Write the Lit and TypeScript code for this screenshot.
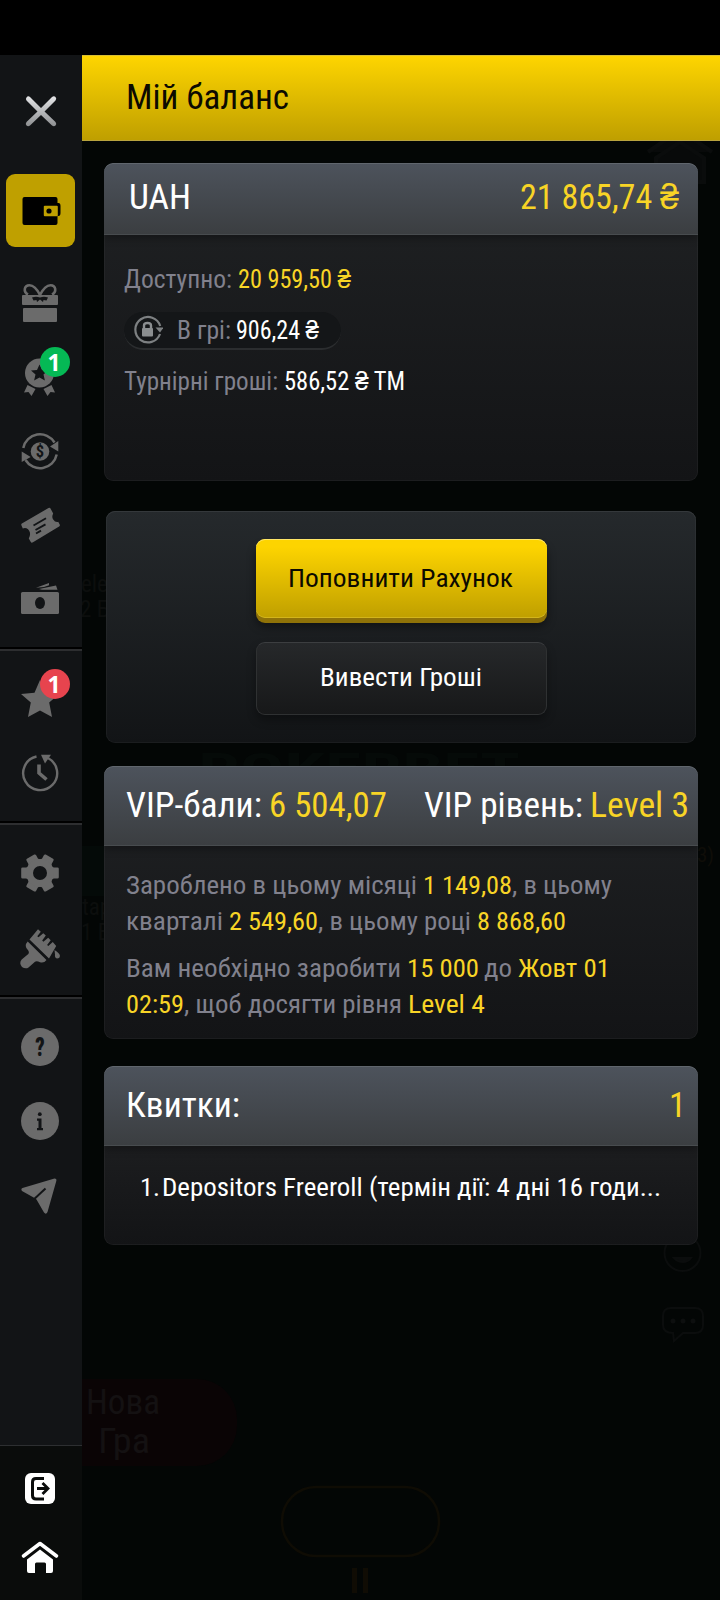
import { LitElement, html, svg, css } from "lit";
import { customElement, property } from "lit/decorators.js";

/* A single run of text, set to an exact advance width. */
@customElement("text-run")
class TextRun extends LitElement {
  @property() text = "";
  @property({ type: Number }) width = 100;
  @property({ type: Number }) size = 26;

  static styles = css`
    :host { display: block; flex: none; }
    svg { display: block; overflow: visible; fill: currentColor; }
  `;

  render() {
    const base = Math.floor(this.size);
    return html`<svg width=${this.width} height=${Math.round(base * 1.4)}>
      <text x="0" y=${base} font-size=${this.size}
        font-family="'Roboto Condensed', Roboto, sans-serif" font-stretch="75%"
        textLength=${this.width} lengthAdjust="spacingAndGlyphs">${this.text}</text>
    </svg>`;
  }
}

type Run = [text: string, width: number, tone: string, gap?: number];
const line = (size: number, runs: Run[], cls = "") => html`
  <div class="line ${cls}">
    ${runs.map(([t, w, tone, gap = 0]) => html`
      <text-run class=${tone} .text=${t} .width=${w} .size=${size} style="margin-left:${gap}px"></text-run>`)}
  </div>`;

const icons: Record<string, unknown> = {
  wallet: svg`<path d="M4 6h31q2 0 2 2v4h1q2 0 2 3v7q0 3-2 3h-1v7q0 2-2 2H4q-2 0-2-2V8q0-2 2-2z" fill="#000" transform="translate(-.5 0)"/>
    <rect x="22.800" y="14.800" width="14" height="10.400" rx="1" fill="#bfa000"/><circle cx="28" cy="20" r="2.600" fill="#000"/>`,
  gift: svg`<path d="M20 12C16 4 13 2.200 9.500 2.200C4 2.200 3 9 8 11.500M20 12C24 4 27 2.200 30.500 2.200C36 2.200 37 9 32 11.500" fill="none" stroke="#6b6b6b" stroke-width="2.600"/>
    <rect x="2" y="12" width="36" height="10" rx="1"/><rect x="3" y="25" width="34" height="14" rx="1"/>
    <path d="M12 14.500q4-1.500 8 0 4-1.500 8 0l-1.500 3-3-.5-.5 2-3-2.500-3 2.500-.5-2-3 .5z" fill="#121416"/>`,
  medal: svg`<circle cx="19.500" cy="16" r="14.500"/>
    <path d="M19.500 7.500l2.500 5.500 6 .6-4.500 4 1.400 6-5.400-3.100-5.400 3.100 1.400-6-4.500-4 6-.6z" fill="#121416"/>
    <path d="M7.500 28l8 4-4 7-3-4-4.500 .5zM31.500 28l-8 4 4 7 3-4 4.500 .5z"/>`,
  swap: svg`<g fill="none" stroke="#6b6b6b" stroke-width="2.500"><path d="M3.300 17A17 17 0 0 1 34.500 11.500"/><path d="M36.700 23.500A17 17 0 0 1 5.500 29"/></g>
    <path d="M38.300 10v10.500L30 15.500zM1.700 31V20.500l9 5.500z"/><circle cx="20" cy="20.500" r="9.300"/>
    <text x="20" y="26.300" text-anchor="middle" font-family="Roboto, sans-serif" font-weight="700" font-size="16.500" fill="#121416">$</text>`,
  ticket: svg`<path d="M1.500 20.500q-.8-1.500 .8-2.300L28.500 3q1.500-.8 2 .5l2.700 5q-2.500 5 1.800 8 2 .8 3.200 .2l1.500 2.700q.6 1.300-.6 2L13 37.300q-1.500 1-2.200-.2l-2-3.500q3.400-7-2.300-10.300-2-.5-3.700 .2z"/>
    <path d="M13.500 20.500l12.500-7.200M15.500 25l10-5.700M16 28.500l5-2.800" stroke="#121416" stroke-width="1.900" fill="none"/>`,
  cash: svg`<rect x="1" y="13" width="38" height="22" rx="1.500"/><ellipse cx="20" cy="24" rx="5" ry="6" fill="#121416"/>
    <path d="M16 8.800l13-4.800v2.300l-5 1.700zM19 10L36 6.500l1.500 4.200H22z"/>`,
  star: svg`<path d="M20 1l5.500 12.700 13.500 1.300-9.800 8.500 2.800 14.500-12-6.500L8 38l2.800-14.500L1 15l13.500-1.300z"/>`,
  clock: svg`<path d="M16.500 3.500A17 17 0 1 0 28 5" fill="none" stroke="#6b6b6b" stroke-width="2.400"/>
    <path d="M21 1.800h10L25 10.500z"/><path d="M19 11.500v8.500l7.500 6.500" fill="none" stroke="#6b6b6b" stroke-width="3.600"/>`,
  gear: svg`${[0, 60, 120, 180, 240, 300].map((a) => svg`<path d="M30 13.200l4 1.300h3.500q1.300 0 1.300 1.300v8.400q0 1.300-1.300 1.300H34l-4 1.300z" transform="rotate(${a} 20 20)"/>`)}
    <circle cx="20" cy="20" r="10.500" fill="none" stroke="#6b6b6b" stroke-width="7"/>`,
  brush: svg`<path d="M9.500 12.500L18 2.300l2.800 2.400-3.500 4.500 1.200 1.100 4.800-4 2.500 2.300-3.600 5 1.200 1.100 4.800-4 2.500 2.500-3.600 4.800 1.200 1.100 4.500-4 3.400 4L29 31.500z"/>
    <path d="M7.700 14.500L26.500 33q-2.500 3.500-6.500 2.300-3.500-1.800-5.300-.3L8.500 40.500q-3 2-6.500-.6-3.300-3.700-.3-7.300L8.300 27q1.500-2-.8-4.500-3.500-4 .2-8z"/><path d="M8.600 13.500L27.700 32.300" stroke="#121416" stroke-width="1.500"/>
    <path d="M34.500 23q5 3 5.400 5.500 .2 3-2.900 3-2.500-.5-2-4z"/>`,
  help: svg`<circle cx="20" cy="20" r="19"/><text x="20" y="28.700" text-anchor="middle" font-family="Roboto Condensed, Roboto" font-stretch="75%" font-weight="900" font-size="25" textLength="9.500" lengthAdjust="spacingAndGlyphs" fill="#121416">?</text>`,
  info: svg`<circle cx="20" cy="20" r="19"/><circle cx="19.800" cy="13.200" r="1.900" fill="#121416"/><path d="M17 17.500h4.500v9.500h1.500v2.300h-6V27h1.500v-7.200H17z" fill="#121416"/>`,
  send: svg`<path d="M2.500 13L34.500 3.500q2.500 0 1.800 2.500L27.500 37q-1.500 3-3.500 .5L16.500 24.500 14.500 23 2 16q-1.500-2 .5-3z"/><path d="M14.500 23.700L25.500 13.500" stroke="#121416" stroke-width="2"/>`,
  close: svg`<defs><linearGradient id="x" x1="0" y1="0" x2="0" y2="1"><stop offset="0" stop-color="#e4e5e7"/><stop offset="1" stop-color="#8d8f91"/></linearGradient></defs>
    <path fill="url(#x)" d="M6.500 6.500q1.500-2 3.500-.5L21 17 32 6q2-1.500 3.500 0 1.500 1.500 0 3.500L24.500 20.500 35.500 31q1.500 2 0 3.500-1.500 1.300-3.500 0L21 24 10 34.500q-2 1.300-3.500 0-1.500-1.500 0-3.500L17.500 20.500 6.500 9.500q-1.200-1.500 0-3z"/>`,
  exit: svg`<rect x="5" y="4" width="30" height="31" rx="6" fill="#fff"/><path d="M24 9.500H16q-3.500 0-3.500 3.500v13.500q0 3.500 3.500 3.500h8" fill="none" stroke="#0a0c0b" stroke-width="3"/>
    <path d="M17 19.500h10M22.500 14l5.500 5.500-5.500 5.500" fill="none" stroke="#0a0c0b" stroke-width="2.800"/>`,
  home: svg`<path d="M3.500 18L20 5.500 36.500 18" fill="none" stroke="#fff" stroke-width="3.600" stroke-linecap="round" stroke-linejoin="round"/>
    <path d="M20 11.500L33 21.500V33q0 2-2 2h-5v-9q0-1.500-1.500-1.500h-8Q15 24.500 15 26v9H9q-2 0-2-2V21.500z" fill="#fff"/>`,
};
const icon = (name: string) => html`<svg class="icon" viewBox="0 0 40 40">${icons[name]}</svg>`;
const item = (name: string, badge = "") => html`
  <div class="item"><div class="glyph">${icon(name)}${badge ? html`<span class="badge ${badge}">1</span>` : ""}</div></div>`;

@customElement("app-root")
class AppRoot extends LitElement {
  static styles = css`
    :host {
      display: block; position: relative; width: 720px; height: 1600px; overflow: hidden;
      background: #030605; font-family: "Roboto Condensed", Roboto, sans-serif; font-stretch: 75%;
    }
    .status { height: 55px; background: #000; }
    .app { display: flex; height: 1545px; position: relative; }
    .rail {
      width: 82px; box-sizing: border-box; padding-right: 2px; background: #121416; flex: none;
      display: flex; flex-direction: column; fill: #6b6b6b;
    }
    .icon { width: 40px; height: 40px; display: block; flex: none; overflow: visible; }
    .close { height: 112px; margin-bottom: 7px; display: flex; align-items: center; justify-content: center; }
    .active {
      height: 73px; width: 69px; margin: 0 0 19px 6px; border-radius: 9px; background: #bfa000;
      display: flex; align-items: center; justify-content: center;
    }
    .group { padding: 11px 0 13px; margin-right: -2px; border-bottom: 2px solid #2d2e30; box-shadow: inset 0 -2px #000; }
    .group.first { padding-top: 0; }
    .group.last { border: 0; box-shadow: none; }
    .item { height: 74px; width: 80px; display: flex; align-items: center; justify-content: center; }
    .glyph { position: relative; }
    .badge {
      position: absolute; left: 20px; top: -10px; width: 30px; height: 30px; border-radius: 50%;
      font: 700 23px/30px "Open Sans", "Noto Sans", sans-serif; color: #fff; text-align: center; text-indent: -2px;
    }
    .green { background: #05b955; }
    .red { background: #e7444e; }
    .foot {
      margin: auto -2px 0 0; height: 155px; border-top: 1px solid #2d2f31; background: #0a0c0b;
      display: flex; flex-direction: column; align-items: center; padding: 23px 2px 0 0; box-sizing: border-box; gap: 29px;
    }
    .panel { flex: 1; min-width: 0; }
    .title {
      height: 86px; box-sizing: border-box; padding: 18px 0 0 44px; color: #0c0a00;
      background: linear-gradient(#fed500, #bf9f00); border-top: 1px solid #d8be32; border-bottom: 1px solid #b8a33e;
    }
    .stack { padding: 22px 22px 0; display: flex; flex-direction: column; }
    .line { display: flex; }
    .card {
      border-radius: 9px; overflow: hidden; box-sizing: border-box; position: relative;
      background: linear-gradient(#202224, #131416); box-shadow: inset 0 0 0 1px #ffffff0a;
    }
    .head {
      box-sizing: border-box; background: linear-gradient(#4d535c, #3b3e41); border-bottom: 1px solid #484c4f;
      box-shadow: inset 0 1px #60666d, 0 3px 9px #0005; display: flex; justify-content: space-between; border-radius: 9px 9px 0 0;
    }
    .white { color: #fff; }
    .gold { color: #f8d426; }
    .grey { color: #81818d; }
    .black { color: #0c0a00; }
    .balance { height: 318px; }
    .balance .head { height: 72px; padding: 11px 19px 0 25px; }
    .balance .body { padding: 28px 20px 0; display: flex; flex-direction: column; align-items: flex-start; }
    .pill {
      display: flex; align-items: center; width: 217px; height: 38px; box-sizing: border-box; margin: 14px 0 15px; border-radius: 19px;
      background: #141618; border-bottom: 2px solid #2b2d2f; padding-left: 9px;
    }
    .lock { width: 30px; height: 30px; margin-right: 14px; }
    .pill .line { padding-top: 3px; }
    .actions {
      margin: 30px 2px 0; height: 232px; padding-top: 28px; background: linear-gradient(#25292c, #121416);
      display: flex; flex-direction: column; align-items: center; box-shadow: inset 0 1px #34383b, inset 0 0 0 1px #ffffff0a;
    }
    .btn { width: 291px; box-sizing: border-box; border-radius: 9px; display: flex; justify-content: center; flex: none; padding-right: 1px; }
    .deposit {
      height: 79px; padding-top: 22px; background: linear-gradient(#fdd400 10%, #bf9f00); margin-bottom: 24px;
      box-shadow: 0 5px #8f7208, inset 0 1px #ffe668, inset 0 -1px #d2b41c, 0 8px 10px #0007;
    }
    .withdraw {
      height: 73px; padding-top: 17px; background: linear-gradient(#26282a, #171819);
      border: 1px solid #2f3132; border-top-color: #3c3e40; box-shadow: 0 5px 10px #0005;
    }
    .vip { margin-top: 23px; height: 273px; }
    .vip .head, .tickets .head { height: 80px; padding: 16px 9px 0 22px; }
    .vip .body { padding: 22px 22px 0; }
    .second { margin-bottom: 11px; }
    .tickets { margin-top: 27px; height: 179px; background: linear-gradient(#1c1d1f 45%, #131416); }
    .tickets .head { padding-right: 12px; }
    .tickets .body { padding: 24px 36px 0; }
    .ghost { position: absolute; inset: 0; width: 720px; height: 1600px; }
    .ghost text { font-family: "Roboto Condensed", Roboto, sans-serif; font-stretch: 75%; }
  `;

  render() {
    return html`
      <svg class="ghost" viewBox="0 0 720 1600">
        <path d="M648 152l32-22 32 22M656 158l24-16 24 16v24h-48z" fill="#080a0a" stroke="#0a0c0c" stroke-width="4"/>
        <g fill="#0c0e0d" font-size="23"><text x="81" y="592">ele</text><text x="80" y="617">2 Б</text><text x="82" y="915">tap</text><text x="81" y="940">1 Б</text></g>
        <text x="198" y="783" textLength="322" lengthAdjust="spacingAndGlyphs" font-size="42" font-weight="700" fill="#050a08">POKERBET</text>
        <rect x="82" y="846" width="22" height="50" fill="#040a08"/>
        <text x="697" y="862" font-size="21" fill="#0f0d08">3)</text>
        <rect x="30" y="1379" width="207" height="87" rx="40" fill="#0a0405"/>
        <g fill="#141112" font-size="35"><text x="86" y="1414" textLength="74" lengthAdjust="spacingAndGlyphs">Нова</text><text x="98" y="1453" textLength="52" lengthAdjust="spacingAndGlyphs">Гра</text></g>
        <rect x="282" y="1487" width="157" height="69" rx="34" fill="none" stroke="#0f0c04" stroke-width="2.500"/>
        <path d="M352 1568h5v25h-5zM363 1568h5v25h-5z" fill="#100c04"/>
        <g fill="none" stroke="#0b0d0d" stroke-width="2"><circle cx="682.500" cy="1253" r="18"/><path d="M674 1258h17q-3 4-8 4t-9-4z" fill="#0b0d0d"/>
        <path d="M671 1308h24q8 0 8 8v9q0 8-8 8h-12l-9 8-1-8q-10 0-10-8v-9q0-8 8-8z"/></g>
        <g fill="#0d0f0f"><circle cx="673" cy="1321" r="2.500"/><circle cx="683" cy="1321" r="2.500"/><circle cx="693" cy="1321" r="2.500"/></g>
      </svg>
      <div class="status"></div>
      <div class="app">
        <nav class="rail">
          <div class="close">${icon("close")}</div>
          <div class="active">${icon("wallet")}</div>
          <div class="group first">${item("gift")}${item("medal", "green")}${item("swap")}${item("ticket")}${item("cash")}</div>
          <div class="group">${item("star", "red")}${item("clock")}</div>
          <div class="group">${item("gear")}${item("brush")}</div>
          <div class="group last">${item("help")}${item("info")}${item("send")}</div>
          <div class="foot">${icon("exit")}${icon("home")}</div>
        </nav>
        <main class="panel">
          <header class="title">${line(35, [["Мій баланс", 163, "black"]])}</header>
          <div class="stack">
            <section class="card balance">
              <div class="head">${line(35, [["UAH", 62, "white"]])}${line(35, [["21 865,74 ₴", 159, "gold"]])}</div>
              <div class="body">
                ${line(25.5, [["Доступно:", 108, "grey"], ["20 959,50 ₴", 113, "gold", 6]])}
                <div class="pill">
                  <svg class="lock" viewBox="0 0 30 30"><path d="M27 19A12.700 12.700 0 1 1 27.200 11" fill="none" stroke="#7d8082" stroke-width="2.200"/>
                    <path d="M22.500 12.500h8L27 17.500z" fill="#7d8082"/><rect x="9" y="13" width="11" height="8.500" rx="1" fill="#8b8e90"/><path d="M11 14v-3.500q0-2.500 3.500-2.500t3.500 2.500v3.500" fill="none" stroke="#8b8e90" stroke-width="2.400"/></svg>
                  ${line(25.5, [["В грі:", 54, "grey"], ["906,24 ₴", 83, "white", 5]])}
                </div>
                ${line(25.5, [["Турнірні гроші:", 154, "grey"], ["586,52 ₴ TM", 121, "white", 6]])}
              </div>
            </section>
            <section class="card actions">
              <div class="btn deposit">${line(26.5, [["Поповнити Рахунок", 225, "black"]])}</div>
              <div class="btn withdraw">${line(26.5, [["Вивести Гроші", 162, "white"]])}</div>
            </section>
            <section class="card vip">
              <div class="head">
                ${line(35, [["VIP-бали:", 136, "white"], ["6 504,07", 118, "gold", 7]])}
                ${line(35, [["VIP рівень:", 159, "white"], ["Level 3", 99, "gold", 7]])}
              </div>
              <div class="body">
                ${line(26.5, [["Зароблено в цьому місяці", 291, "grey"], ["1 149,08", 89, "gold", 6], [", в цьому", 100, "grey"]])}
                ${line(26.5, [["кварталі", 97, "grey"], ["2 549,60", 89, "gold", 6], [", в цьому році", 153, "grey"], ["8 868,60", 89, "gold", 6]], "second")}
                ${line(26.5, [["Вам необхідно заробити", 275, "grey"], ["15 000", 72, "gold", 6], ["до", 28, "grey", 5], ["Жовт 01", 92, "gold", 6]])}
                ${line(26.5, [["02:59", 58, "gold"], [", щоб досягти рівня", 218, "grey"], ["Level 4", 77, "gold", 6]])}
              </div>
            </section>
            <section class="card tickets">
              <div class="head">${line(35, [["Квитки:", 114, "white"]])}${line(35, [["1", 17, "gold"]])}</div>
              <div class="body">${line(26.5, [["1.", 20, "white"], ["Depositors Freeroll (термін дії: 4 дні 16 годи...", 499, "white", 2]])}</div>
            </section>
          </div>
        </main>
      </div>`;
  }
}
